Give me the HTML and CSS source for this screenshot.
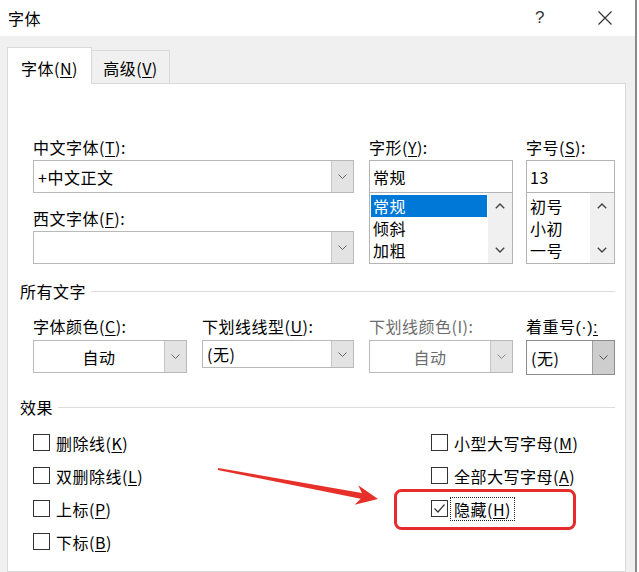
FILE: index.html
```html
<!DOCTYPE html>
<html lang="zh-CN">
<head>
<meta charset="utf-8">
<title>字体</title>
<link rel="stylesheet" href="styles.css">
</head>
<body>
<div class="window">
  <div class="titlebar">
    <span class="title">字体</span>
    <span class="help">?</span>
    <span class="close"><svg width="14" height="14" viewBox="0 0 14 14"><path d="M0.5 0.5 L13.5 13.5 M13.5 0.5 L0.5 13.5" stroke="#333" stroke-width="1.2" fill="none"/></svg></span>
  </div>
  <div class="client">
    <div class="tabs">
      <div class="tab active">字体(<u>N</u>)</div>
      <div class="tab">高级(<u>V</u>)</div>
    </div>
    <div class="panel">
      <div class="font-row">
        <div class="col w321 mr15">
          <div class="label">中文字体(<u>T</u>):</div>
          <div class="combo h33"><span class="val">+中文正文</span><span class="btn"><svg width="9" height="5" viewBox="0 0 9 5"><path d="M0.5 0.5 L4.5 4.5 L8.5 0.5" fill="none" stroke="#666" stroke-width="1"/></svg></span></div>
          <div class="label mt15">西文字体(<u>F</u>):</div>
          <div class="combo h33"><span class="val"></span><span class="btn"><svg width="9" height="5" viewBox="0 0 9 5"><path d="M0.5 0.5 L4.5 4.5 L8.5 0.5" fill="none" stroke="#666" stroke-width="1"/></svg></span></div>
        </div>
        <div class="col w144 mr13">
          <div class="label">字形(<u>Y</u>):</div>
          <div class="textbox">常规</div>
          <div class="listbox">
            <div class="items">
              <div class="item sel">常规</div>
              <div class="item">倾斜</div>
              <div class="item">加粗</div>
            </div>
            <div class="scroll">
              <svg width="10" height="6" viewBox="0 0 10 6"><path d="M0.8 5.2 L5 1 L9.2 5.2" fill="none" stroke="#444" stroke-width="1.4"/></svg>
              <svg width="10" height="6" viewBox="0 0 10 6"><path d="M0.8 0.8 L5 5 L9.2 0.8" fill="none" stroke="#444" stroke-width="1.4"/></svg>
            </div>
          </div>
        </div>
        <div class="col w89">
          <div class="label">字号(<u>S</u>):</div>
          <div class="textbox">13</div>
          <div class="listbox">
            <div class="items">
              <div class="item">初号</div>
              <div class="item">小初</div>
              <div class="item">一号</div>
            </div>
            <div class="scroll">
              <svg width="10" height="6" viewBox="0 0 10 6"><path d="M0.8 5.2 L5 1 L9.2 5.2" fill="none" stroke="#444" stroke-width="1.4"/></svg>
              <svg width="10" height="6" viewBox="0 0 10 6"><path d="M0.8 0.8 L5 5 L9.2 0.8" fill="none" stroke="#444" stroke-width="1.4"/></svg>
            </div>
          </div>
        </div>
      </div>

      <div class="group-head gh1"><span>所有文字</span><i></i></div>

      <div class="opt-row">
        <div class="col w154 mr15">
          <div class="label l24">字体颜色(<u>C</u>):</div>
          <div class="combo h33 center"><span class="val">自动</span><span class="btn"><svg width="9" height="5" viewBox="0 0 9 5"><path d="M0.5 0.5 L4.5 4.5 L8.5 0.5" fill="none" stroke="#666" stroke-width="1"/></svg></span></div>
        </div>
        <div class="col w152 mr15">
          <div class="label l24">下划线线型(<u>U</u>):</div>
          <div class="combo h28"><span class="val">(无)</span><span class="btn"><svg width="9" height="5" viewBox="0 0 9 5"><path d="M0.5 0.5 L4.5 4.5 L8.5 0.5" fill="none" stroke="#666" stroke-width="1"/></svg></span></div>
        </div>
        <div class="col w144 mr13">
          <div class="label l24 dis">下划线颜色(I):</div>
          <div class="combo h33 center dis"><span class="val">自动</span><span class="btn"><svg width="9" height="5" viewBox="0 0 9 5"><path d="M0.5 0.5 L4.5 4.5 L8.5 0.5" fill="none" stroke="#888" stroke-width="1"/></svg></span></div>
        </div>
        <div class="col w89">
          <div class="label l24">着重号<span class="latin">(·)<u>:</u></span></div>
          <div class="combo h35 hot"><span class="val">(无)</span><span class="btn"><svg width="9" height="5" viewBox="0 0 9 5"><path d="M0.5 0.5 L4.5 4.5 L8.5 0.5" fill="none" stroke="#555" stroke-width="1"/></svg></span></div>
        </div>
      </div>

      <div class="group-head gh2"><span>效果</span><i></i></div>

      <div class="effects">
        <div class="check"><span class="box"></span><span class="ctext">删除线(<u>K</u>)</span></div>
        <div class="check"><span class="box"></span><span class="ctext">小型大写字母(<u>M</u>)</span></div>
        <div class="check"><span class="box"></span><span class="ctext">双删除线(<u>L</u>)</span></div>
        <div class="check"><span class="box"></span><span class="ctext">全部大写字母(<u>A</u>)</span></div>
        <div class="check"><span class="box"></span><span class="ctext">上标(<u>P</u>)</span></div>
        <div class="check"><span class="box"><svg width="15" height="15" viewBox="0 0 15 15"><path d="M2.5 7.5 L6 11 L12.5 3.5" fill="none" stroke="#333" stroke-width="1.2"/></svg></span><span class="ctext focus">隐藏(<u>H</u>)</span></div>
        <div class="check"><span class="box"></span><span class="ctext">下标(<u>B</u>)</span></div>
      </div>
    </div>
  </div>
  <svg class="annot" width="639" height="572" viewBox="0 0 639 572">
    <polygon points="218.2,468 361.9,492.9 358.2,485.2 378,499 354.6,504.8 360.7,498.8 217.8,470" fill="#e8302b"/>
    <rect x="395.5" y="490.5" width="179" height="38" rx="6" ry="6" fill="none" stroke="#e52b2b" stroke-width="3"/>
  </svg>
</div>
</body>
</html>
```

FILE: styles.css
```css
* { box-sizing: border-box; }
html, body { margin: 0; padding: 0; background: #fff; }
body {
  font-family: "Noto Sans CJK SC", "Noto Sans", "Liberation Sans", sans-serif;
  font-size: 16px;
  letter-spacing: 0.5px;
  color: #000;
}
u { text-decoration: underline; text-underline-offset: 2px; text-decoration-thickness: 1px; }
.latin { font-family: "Liberation Sans", "Noto Sans", sans-serif; letter-spacing: 0.5px; }

.window {
  position: relative;
  width: 637px;
  height: 572px;
  border-right: 2px solid #8a8a8a;
  display: flex;
  flex-direction: column;
  overflow: hidden;
}

.titlebar {
  height: 36px;
  flex: none;
  display: flex;
  align-items: center;
  background: #fff;
  padding-left: 8px;
}
.title { line-height: 20px; flex: 1; }
.help { width: 10px; text-align: center; color: #333; font-family: "Liberation Sans", sans-serif; font-size: 17px; margin-right: 53px; }
.close { width: 14px; height: 14px; margin-right: 23px; display: flex; }

.client {
  flex: 1;
  background: #f0f0f0;
  padding: 11px 9px 0 7px;
  display: flex;
  flex-direction: column;
}

.tabs {
  display: flex;
  align-items: flex-end;
  height: 37px;
  margin-bottom: -1px;
  position: relative;
  z-index: 1;
}
.tab {
  width: 78px;
  height: 33px;
  margin-bottom: 1px;
  padding-top: 7px;
  line-height: 20px;
  text-align: center;
  border: 1px solid #d9d9d9;
  border-left: none;
  border-bottom: none;
  background: #f0f0f0;
}
.tab.active {
  width: 85px;
  height: 37px;
  margin-bottom: 0;
  padding-top: 10px;
  border-left: 1px solid #d9d9d9;
  background: #fff;
}

.panel {
  flex: 1;
  background: #fff;
  border: 1px solid #d9d9d9;
  padding: 53px 10px 0 25px;
}

.font-row, .opt-row { display: flex; align-items: flex-start; }
.opt-row { margin-top: 15px; }
.col { display: flex; flex-direction: column; }
.w321 { width: 321px; }
.w154 { width: 154px; }
.w152 { width: 152px; }
.w144 { width: 144px; }
.w89 { width: 89px; }
.mr15 { margin-right: 15px; }
.mr13 { margin-right: 13px; }
.mt15 { margin-top: 15px; }

.label { height: 23px; line-height: 20px; white-space: nowrap; }
.label.l24 { height: 24px; }
.dis { color: #6d6d6d; }

.combo {
  display: flex;
  border: 1px solid #b9b9b9;
  background: #fff;
}
.combo.h33 { height: 33px; }
.combo.h28 { height: 28px; }
.combo.h35 { height: 35px; }
.combo .val {
  flex: 1;
  display: flex;
  align-items: center;
  padding-left: 4px;
  line-height: 20px;
  white-space: nowrap;
}
.combo.center .val { justify-content: center; padding-left: 0; }
.combo .btn {
  width: 22px;
  display: flex;
  align-items: center;
  justify-content: center;
  background: #e3e3e3;
  border-left: 1px solid #c6c6c6;
}
.combo.hot { border-color: #8c8c8c; }
.combo.hot .btn { background: #cdcdcd; border-left-color: #a0a0a0; }

.textbox {
  height: 33px;
  border: 1px solid #b4b4b4;
  padding-left: 3px;
  display: flex;
  align-items: center;
  line-height: 20px;
}
.listbox {
  height: 72px;
  margin-top: -1px;
  border: 1px solid #b4b4b4;
  display: flex;
}
.items { flex: 1; padding: 2px 1px 0 1px; }
.item { height: 22px; line-height: 22px; padding-left: 2px; white-space: nowrap; }
.item.sel { background: #0078d7; color: #fff; }
.scroll {
  width: 24px;
  background: #f0f0f0;
  display: flex;
  flex-direction: column;
  justify-content: space-between;
  align-items: center;
  padding: 10px 0 10px;
}

.group-head {
  display: flex;
  align-items: center;
  height: 20px;
  line-height: 20px;
  margin-left: -13px;
}
.group-head i { flex: 1; height: 1px; background: #dcdcdc; margin-left: 5px; }
.gh1 { margin-top: 17px; }
.gh2 { margin-top: 22px; }

.effects {
  margin-top: 9px;
  display: grid;
  grid-template-columns: 398px auto;
  grid-auto-rows: 33px;
}
.check { display: flex; align-items: center; }
.box {
  width: 17px;
  height: 17px;
  border: 1px solid #333;
  background: #fff;
  display: flex;
  align-items: center;
  justify-content: center;
  margin-right: 6px;
  flex: none;
}
.ctext { line-height: 20px; white-space: nowrap; }
.ctext.focus { outline: 1px dotted #222; outline-offset: 1px; margin-left: -2px; padding: 0 2px; }

.annot { position: absolute; left: 0; top: 0; pointer-events: none; }
```
